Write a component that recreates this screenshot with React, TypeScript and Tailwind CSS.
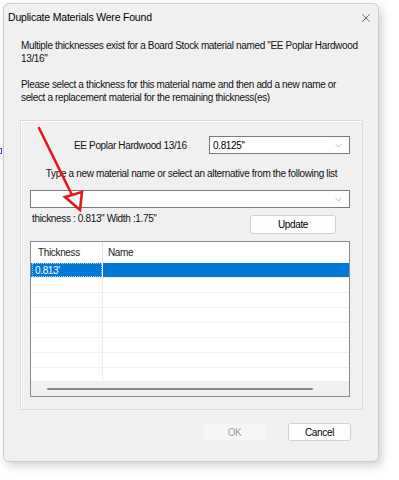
import { X, ChevronDown } from "lucide-react";

const font = { fontFamily: '"Liberation Sans", Arial, sans-serif' };

function Combo({ value, className }: { value?: string; className: string }) {
  return (
    <div
      className={`flex h-[18px] items-center justify-between border border-[#7a7a7a] bg-white pl-[3px] pr-[5px] text-[10px] tracking-[-0.35px] text-black ${className}`}
    >
      <span>{value}</span>
      <ChevronDown size={11} strokeWidth={1.2} className="text-[#808080]" />
    </div>
  );
}

export default function App() {
  const rows = [0, 1, 2, 3, 4, 5, 6];

  return (
    <div className="relative h-[480px] w-[399px] overflow-hidden bg-white" style={font}>
      {/* bit of a window peeking out behind the dialog */}
      <div className="absolute left-0 top-[148px] h-[6px] w-[2px] border-y border-r border-[#4a4ab0]" />

      <div className="ml-[3px] mt-[3px] h-[459px] w-[376px] rounded-[6px] border border-[#cdcdcd] bg-[#f0f0f0] shadow-[3px_4px_10px_rgba(0,0,0,0.18)]">
        <div className="flex h-[28px] items-center justify-between pl-[4px] pr-[5px]">
          <span className="text-[10.5px] tracking-[-0.2px] text-black">Duplicate Materials Were Found</span>
          <X size={14} strokeWidth={1.1} className="text-[#222]" />
        </div>

        <div className="ml-[17px] mt-[7px] w-[345px] text-[10px] leading-[13px] tracking-[-0.35px] text-[#111]">
          <p>Multiple thicknesses exist for a Board Stock material named "EE Poplar Hardwood 13/16"</p>
          <p className="mt-[13px]">
            Please select a thickness for this material name and then add a new name or
            <br />
            select a replacement material for the remaining thickness(es)
          </p>
        </div>

        <div className="ml-[16px] mt-[16px] h-[290px] w-[343px] border border-[#dcdcdc] text-[10px] tracking-[-0.35px] shadow-[inset_1px_1px_0_#fff]">
          <div className="mt-[15px] flex items-center">
            <span className="ml-[53px] w-[115px] whitespace-nowrap text-[#111]">EE Poplar Hardwood 13/16</span>
            <Combo value={"0.8125''"} className="ml-[20px] w-[141px]" />
          </div>

          <p className="mt-[12px] text-center text-[#111]">
            Type a new material name or select an alternative from the following list
          </p>

          <Combo className="ml-[9px] mt-[9px] w-[320px]" />

          <div className="mt-[3px] flex items-start">
            <span className="ml-[11px] w-[218px] text-[#111]">
              thickness : 0.813'' Width :1.75''
            </span>
            <div className="mt-[4px] flex h-[19px] w-[86px] items-center justify-center rounded-[3px] border border-[#d0d0d0] bg-[#fdfdfd] text-black">
              Update
            </div>
          </div>

          <div className="ml-[9px] mt-[7px] flex h-[156px] w-[320px] flex-col border border-[#8c8c8c] bg-white">
            <div className="flex h-[21px] items-center text-[#222]">
              <span className="w-[71px] pl-[7px]">Thickness</span>
              <span className="h-full w-px bg-[#e5e5e5]" />
              <span className="pl-[5px]">Name</span>
            </div>
            {rows.map((r) => (
              <div
                key={r}
                className={`flex h-[15px] shrink-0 border-b border-[#f0f0f0] ${r === 0 ? "bg-[#0078d7] text-white" : ""}`}
              >
                <span
                  className={`ml-[1px] w-[70px] pl-[2px] leading-[13px] ${r === 0 ? "border border-dotted border-[#9cc8f0]" : ""}`}
                >
                  {r === 0 ? "0.813'" : ""}
                </span>
                <span className={`w-px ${r === 0 ? "bg-[#f0f0f0]" : "bg-[#ececec]"}`} />
              </div>
            ))}
            <div className="flex flex-1">
              <span className="w-[71px]" />
              <span className="w-px bg-[#ececec]" />
            </div>
            <div className="flex h-[15px] items-center bg-[#f0f0f0]">
              <div className="ml-[16px] h-[2px] w-[266px] rounded-full bg-[#858585]" />
            </div>
          </div>
        </div>

        <div className="mt-[13px] flex justify-end pr-[27px] text-[10px] tracking-[-0.35px]">
          <div className="flex h-[18px] w-[63px] items-center justify-center rounded-[3px] border border-[#f3f3f3] bg-[#f6f6f6] text-[#a0a0a0]">
            OK
          </div>
          <div className="ml-[22px] flex h-[18px] w-[63px] items-center justify-center rounded-[3px] border border-[#d0d0d0] bg-[#fdfdfd] text-black">
            Cancel
          </div>
        </div>
      </div>

      {/* red annotation arrow */}
      <svg className="absolute left-0 top-0" width="399" height="480" viewBox="0 0 399 480">
        <line x1="39" y1="128" x2="72" y2="195" stroke="#e8161b" strokeWidth="2.6" strokeLinecap="round" />
        <polygon points="65,197 82,192 80,210" fill="none" stroke="#e8161b" strokeWidth="2.6" strokeLinejoin="miter" />
      </svg>
    </div>
  );
}
